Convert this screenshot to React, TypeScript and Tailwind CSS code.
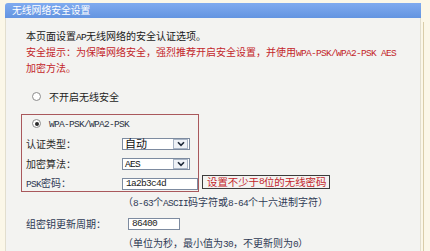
import React from "react";

const CJK = "font-['SimSun','Noto_Sans_CJK_SC',sans-serif]";

function L({ children }: { children: React.ReactNode }) {
  return (
    <span className="font-['Liberation_Mono','Noto_Sans_CJK_SC',monospace] text-[9.5px] tracking-[-0.7px]">
      {children}
    </span>
  );
}

function Chevron() {
  return (
    <svg width="8" height="6" viewBox="0 0 8 6">
      <path d="M1 1.2 L4 4.4 L7 1.2" fill="none" stroke="#1f2a3a" strokeWidth="1.6" />
    </svg>
  );
}

function Select({ value, mono }: { value: string; mono?: boolean }) {
  return (
    <div className="w-[68px] h-[12px] bg-white border border-[#7d8ba0] flex items-center">
      <div className="flex-1 pl-[2px] leading-[10px] text-[#111]">
        {mono ? <L>{value}</L> : <span className="text-[11px]">{value}</span>}
      </div>
      <div className="w-[15px] h-[10px] mr-[1px] bg-[#eef1f6] border border-[#a9b5c6] flex items-center justify-center">
        <Chevron />
      </div>
    </div>
  );
}

function Radio({ checked }: { checked?: boolean }) {
  return (
    <div className="w-[9px] h-[9px] rounded-full border border-[#8c8c8c] bg-white flex items-center justify-center">
      {checked && <div className="w-[4px] h-[4px] rounded-full bg-[#2a2a2a]" />}
    </div>
  );
}

export default function App() {
  return (
    <div className={`w-[430px] h-[251px] bg-[#fbf7e8] overflow-hidden pt-[3px] pl-[5px] flex ${CJK} text-[10px]`}>
      <div className="w-[416px] flex flex-col">
        <div className="h-[19px] rounded-tl-[3px] bg-gradient-to-b from-[#80abef] to-[#6394e1] flex items-center pl-[7px] text-white text-[9.8px]">
          无线网络安全设置
        </div>
        <div className="flex-1 bg-[#f3f3f1] border-l border-r border-[#e2dece] pl-[15px] pt-[11px]">
          <div className="pl-[5px] leading-[14px] text-[#1a1a1a]">
            本页面设置<L>AP</L>无线网络的安全认证选项。
          </div>
          <div className="pl-[5px] leading-[14px] text-[#c3262b]">
            安全提示：为保障网络安全，强烈推荐开启安全设置，并使用<L>WPA-PSK/WPA2-PSK AES</L>
          </div>
          <div className="pl-[5px] leading-[14px] text-[#c3262b]">加密方法。</div>

          <div className="mt-[15px] h-[14px] flex items-center pl-[11px]">
            <Radio />
            <span className="ml-[8px] text-[#222]">不开启无线安全</span>
          </div>

          <div className="mt-[10px] flex items-end">
            <div className="w-[178px] border border-[#a9585c] pl-[4px] pb-[1px]">
              <div className="h-[18px] flex items-center pl-[6px]">
                <Radio checked />
                <span className="ml-[8px] text-[#2c3444]">
                  <L>WPA-PSK/WPA2-PSK</L>
                </span>
              </div>
              <div className="mt-[5px] h-[12px] flex items-center">
                <div className="w-[96px] text-[#2b2b2b]">认证类型：</div>
                <Select value="自动" />
              </div>
              <div className="mt-[8px] h-[12px] flex items-center">
                <div className="w-[96px] text-[#2b2b2b]">加密算法：</div>
                <Select value="AES" mono />
              </div>
              <div className="mt-[8px] h-[12px] flex items-center">
                <div className="w-[96px] text-[#2f3a55]">
                  <L>PSK</L>密码：
                </div>
                <div className="w-[76px] h-[12px] bg-white border border-[#7d8ba0] pl-[3px] flex items-center text-[#222]">
                  <L>1a2b3c4d</L>
                </div>
              </div>
            </div>
            <div className="ml-[3px] mb-[3px] w-[128px] h-[14px] border border-[#3c3c3c] flex items-center pl-[4px] text-[10.4px] text-[#c3262b]">
              设置不少于<L>8</L>位的无线密码
            </div>
          </div>

          <div className="mt-[3px] leading-[14px] pl-[102px] text-[#2f3a55]">
            （<L>8-63</L>个<L>ASCII</L>码字符或<L>8-64</L>个十六进制字符）
          </div>

          <div className="mt-[7px] h-[12px] flex items-center">
            <div className="w-[107px] pl-[5px] text-[#2f3a55]">组密钥更新周期：</div>
            <div className="w-[52px] h-[12px] bg-white border border-[#7d8ba0] pl-[3px] flex items-center text-[#222]">
              <L>86400</L>
            </div>
          </div>

          <div className="mt-[6px] leading-[14px] pl-[102px] text-[#2f3a55]">
            （单位为秒，最小值为<L>30</L>，不更新则为<L>0</L>）
          </div>
        </div>
      </div>
      <div className="ml-[2px] mt-[19px] w-px bg-[#d9cda8]" />
    </div>
  );
}
